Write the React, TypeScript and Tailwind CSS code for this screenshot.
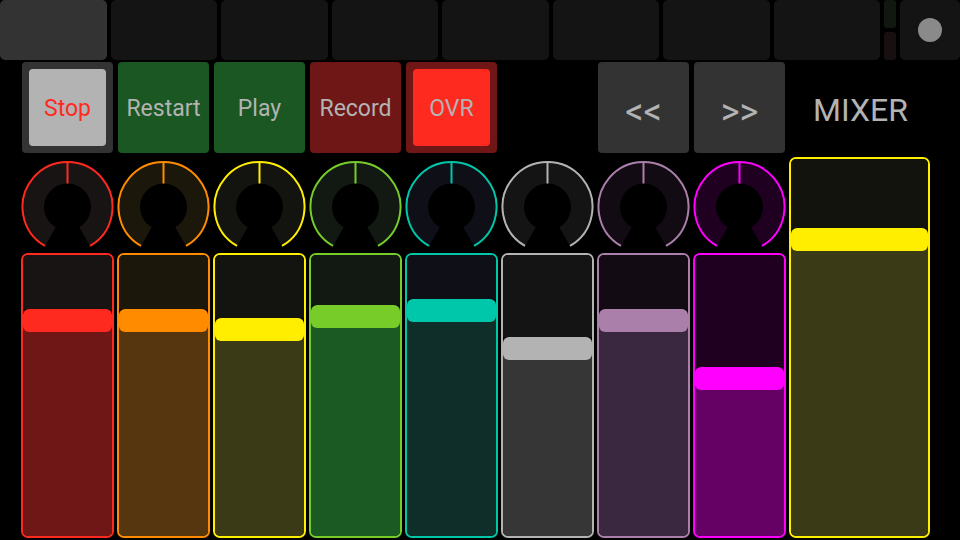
import React from 'react'

type Channel = {
  color: string
  dark: string
  border: string
  top: string
  bottom: string
  handle: string
  gap: string
}

const channels: Channel[] = [
  { color: '#ff2a1f', dark: '#181414', border: 'border-[#ff2a1f]', top: 'bg-[#181414]', bottom: 'bg-[#6e1716]', handle: 'bg-[#ff2a1f]', gap: 'h-[54px]' },
  { color: '#ff8c00', dark: '#1b170b', border: 'border-[#ff8c00]', top: 'bg-[#1b170b]', bottom: 'bg-[#56360e]', handle: 'bg-[#ff8c00]', gap: 'h-[54px]' },
  { color: '#ffee00', dark: '#131310', border: 'border-[#ffee00]', top: 'bg-[#131310]', bottom: 'bg-[#3a3a16]', handle: 'bg-[#ffee00]', gap: 'h-[63px]' },
  { color: '#77cc2a', dark: '#121812', border: 'border-[#77cc2a]', top: 'bg-[#121812]', bottom: 'bg-[#1b5a22]', handle: 'bg-[#77cc2a]', gap: 'h-[50px]' },
  { color: '#00c6aa', dark: '#0f0f18', border: 'border-[#00c6aa]', top: 'bg-[#0f0f18]', bottom: 'bg-[#0f2e2a]', handle: 'bg-[#00c6aa]', gap: 'h-[44px]' },
  { color: '#b3b3b3', dark: '#141414', border: 'border-[#b3b3b3]', top: 'bg-[#141414]', bottom: 'bg-[#363636]', handle: 'bg-[#b3b3b3]', gap: 'h-[82px]' },
  { color: '#aa7faa', dark: '#130b13', border: 'border-[#aa7faa]', top: 'bg-[#130b13]', bottom: 'bg-[#3a2740]', handle: 'bg-[#aa7faa]', gap: 'h-[54px]' },
  { color: '#ff00ff', dark: '#1f0021', border: 'border-[#ff00ff]', top: 'bg-[#1f0021]', bottom: 'bg-[#650064]', handle: 'bg-[#ff00ff]', gap: 'h-[112px]' },
]

// point on a circle, angle in degrees clockwise from 12 o'clock
function pt(cx: number, cy: number, r: number, a: number) {
  const rad = (a * Math.PI) / 180
  return `${(cx + r * Math.sin(rad)).toFixed(2)} ${(cy - r * Math.cos(rad)).toFixed(2)}`
}

function Knob({ color, dark }: { color: string; dark: string }) {
  const cx = 46.5
  const cy = 48
  const R = 45
  const r = 23.5
  const fill = `M ${pt(cx, cy, R, 210)} A ${R} ${R} 0 1 1 ${pt(cx, cy, R, 150)} L ${pt(cx, cy, r, 150)} A ${r} ${r} 0 1 0 ${pt(cx, cy, r, 210)} Z`
  const arc = `M ${pt(cx, cy, R, 210)} A ${R} ${R} 0 1 1 ${pt(cx, cy, R, 150)}`
  return (
    <svg width="93" height="92" viewBox="0 0 93 92" className="block">
      <path d={fill} fill={dark} />
      <path d={arc} fill="none" stroke={color} strokeWidth="2" />
      <line x1={cx} y1={cy - R} x2={cx} y2={cy - r} stroke={color} strokeWidth="2" />
    </svg>
  )
}

function Fader({ ch }: { ch: Channel }) {
  return (
    <div className={`flex-1 flex flex-col border-2 rounded-[7px] overflow-hidden ${ch.border}`}>
      <div className={`${ch.gap} ${ch.top}`} />
      <div className={`h-[23px] rounded-[6px] relative z-10 ${ch.handle}`} />
      <div className={`flex-1 -mt-[8px] ${ch.bottom}`} />
    </div>
  )
}

export default function App() {
  return (
    <div className="w-[960px] h-[540px] bg-black overflow-hidden" style={{ fontFamily: 'Roboto, "Liberation Sans", sans-serif' }}>
      {/* top tabs */}
      <div className="grid grid-cols-[repeat(8,1fr)_12px_60px] gap-[4px] h-[60px]">
        <div className="rounded-[5px] bg-[#333333]" />
        {[0, 1, 2, 3, 4, 5, 6].map(i => (
          <div key={i} className="rounded-[5px] bg-[#141414]" />
        ))}
        <div className="flex flex-col gap-[4px]">
          <div className="flex-1 rounded-[3px] bg-[#101810]" />
          <div className="flex-1 rounded-[3px] bg-[#181010]" />
        </div>
        <div className="rounded-[5px] bg-[#141414] flex items-center justify-center">
          <div className="w-[24px] h-[24px] rounded-full bg-[#8a8a8a]" />
        </div>
      </div>

      {/* transport */}
      <div className="flex mt-[2px] pl-[22px] h-[91px] gap-[5px] text-[23px] text-[#b3b3b3]">
        <div className="w-[91px] rounded-[4px] bg-[#333333] p-[7px] flex">
          <div className="flex-1 rounded-[4px] bg-[#b3b3b3] flex items-center justify-center pt-[3px] text-[#ff2a1f]">Stop</div>
        </div>
        <div className="w-[91px] rounded-[4px] bg-[#1b5722] flex items-center justify-center pt-[3px]">Restart</div>
        <div className="w-[91px] rounded-[4px] bg-[#1b5722] flex items-center justify-center pt-[3px]">Play</div>
        <div className="w-[91px] rounded-[4px] bg-[#6e1716] flex items-center justify-center pt-[3px]">Record</div>
        <div className="w-[91px] rounded-[4px] bg-[#6e1716] p-[7px] flex">
          <div className="flex-1 rounded-[4px] bg-[#ff2a1f] flex items-center justify-center pt-[3px]">OVR</div>
        </div>
        <div className="w-[91px] ml-[96px] rounded-[4px] bg-[#333333] flex items-center justify-center pt-[8px] text-[36px]">&lt;&lt;</div>
        <div className="w-[91px] rounded-[4px] bg-[#333333] flex items-center justify-center pt-[8px] text-[36px]">&gt;&gt;</div>
        <div className="flex-1 flex items-center pl-[23px] text-[32px] pt-[4px]">MIXER</div>
      </div>

      {/* channels + master */}
      <div className="flex pl-[21px] gap-[3px]">
        {channels.map((ch, i) => (
          <div key={i} className="w-[93px] flex flex-col pt-[6px] gap-[2px] h-[385px]">
            <Knob color={ch.color} dark={ch.dark} />
            <Fader ch={ch} />
          </div>
        ))}
        <div className="w-[141px] pt-[4px] h-[385px] flex flex-col">
          <div className="flex-1 flex flex-col border-2 rounded-[7px] overflow-hidden border-[#ffee00]">
            <div className="h-[69px] bg-[#13130e]" />
            <div className="h-[23px] rounded-[6px] bg-[#ffee00] relative z-10" />
            <div className="flex-1 -mt-[8px] bg-[#3a3a16]" />
          </div>
        </div>
      </div>
    </div>
  )
}
